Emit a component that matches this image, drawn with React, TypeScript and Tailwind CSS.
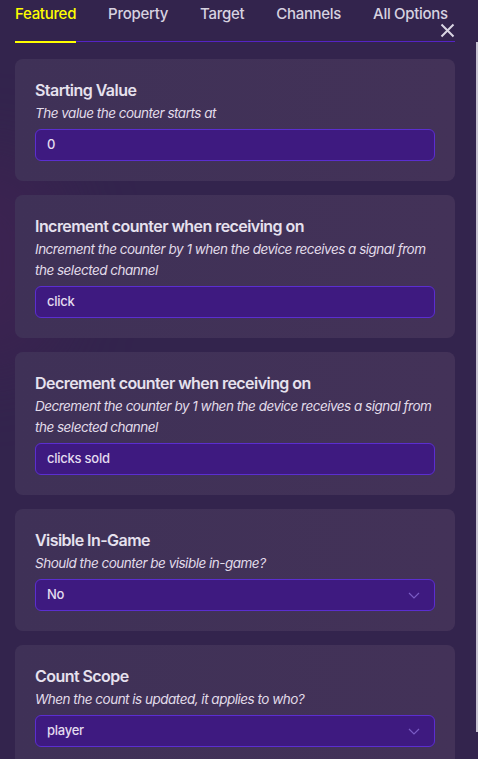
import React from "react";

type Field = {
  title: string;
  desc: string;
  value: string;
  select?: boolean;
};

const fields: Field[] = [
  { title: "Starting Value", desc: "The value the counter starts at", value: "0" },
  {
    title: "Increment counter when receiving on",
    desc: "Increment the counter by 1 when the device receives a signal from the selected channel",
    value: "click",
  },
  {
    title: "Decrement counter when receiving on",
    desc: "Decrement the counter by 1 when the device receives a signal from the selected channel",
    value: "clicks sold",
  },
  { title: "Visible In-Game", desc: "Should the counter be visible in-game?", value: "No", select: true },
  { title: "Count Scope", desc: "When the count is updated, it applies to who?", value: "player", select: true },
];

const tabs = ["Featured", "Property", "Target", "Channels", "All Options"];

function Card({ f }: { f: Field }) {
  return (
    <div className="w-[440px] shrink-0 rounded-[8px] bg-gradient-to-r from-[#3f3157] to-[#433258] px-[20px] pt-[21px] pb-[20px]">
      <div className="text-[16px] leading-[20px] font-semibold tracking-[-0.55px] text-[#e6e1ee]">{f.title}</div>
      <div className="mt-[3px] text-[13.5px] leading-[21px] italic tracking-[-0.5px] text-[#e2dcea]">{f.desc}</div>
      <div className="mt-[5px] flex h-[32px] items-center justify-between rounded-[6px] border border-[#5b2ed0] bg-[#3e1a80] pl-[11px] pr-[14px]">
        <span className="text-[13px] font-medium tracking-[-0.25px] text-[#e3dcef]">{f.value}</span>
        {f.select && (
          <svg width="12" height="7" viewBox="0 0 12 7" fill="none">
            <path d="M1 1 L6 6 L11 1" stroke="#7a5cc4" strokeWidth="1.2" />
          </svg>
        )}
      </div>
    </div>
  );
}

export default function App() {
  return (
    <div
      className="relative h-[759px] w-[478px] overflow-hidden bg-[#33244d]"
      style={{ fontFamily: "Inter, 'Noto Sans', sans-serif" }}
    >
      <div className="pointer-events-none absolute left-[-80px] top-[150px] h-[220px] w-[140px] rounded-full bg-[#4a2358] opacity-40 blur-2xl" />
      <div className="relative">
        <div className="ml-[15px] mr-[23px] flex border-b border-[#5423c4] pt-[4px]">
          {tabs.map((t, i) => (
            <div
              key={t}
              className={
                i === 0
                  ? "mb-[-2px] shrink-0 whitespace-nowrap border-b-[2px] border-[#ffff00] pb-[17px] text-[15px] leading-[20px] font-medium tracking-[-0.3px] text-[#ffff00]"
                  : "ml-[32px] shrink-0 whitespace-nowrap pb-[17px] text-[15px] leading-[20px] font-medium tracking-[-0.3px] text-[#d7d2e0]"
              }
            >
              {t}
            </div>
          ))}
        </div>
        <div className="mt-[17px] flex flex-col gap-[14px] px-[15px]">
          {fields.map((f) => (
            <Card key={f.title} f={f} />
          ))}
        </div>
      </div>
      <svg className="absolute left-[440px] top-[23px]" width="15" height="15" viewBox="0 0 15 15">
        <path d="M1.5 1.5 L13.5 13.5 M13.5 1.5 L1.5 13.5" stroke="#d9d5e2" strokeWidth="2" />
      </svg>
      <div className="absolute right-0 top-[42px] h-[690px] w-[2px] bg-[#c8c4d2]" />
    </div>
  );
}
